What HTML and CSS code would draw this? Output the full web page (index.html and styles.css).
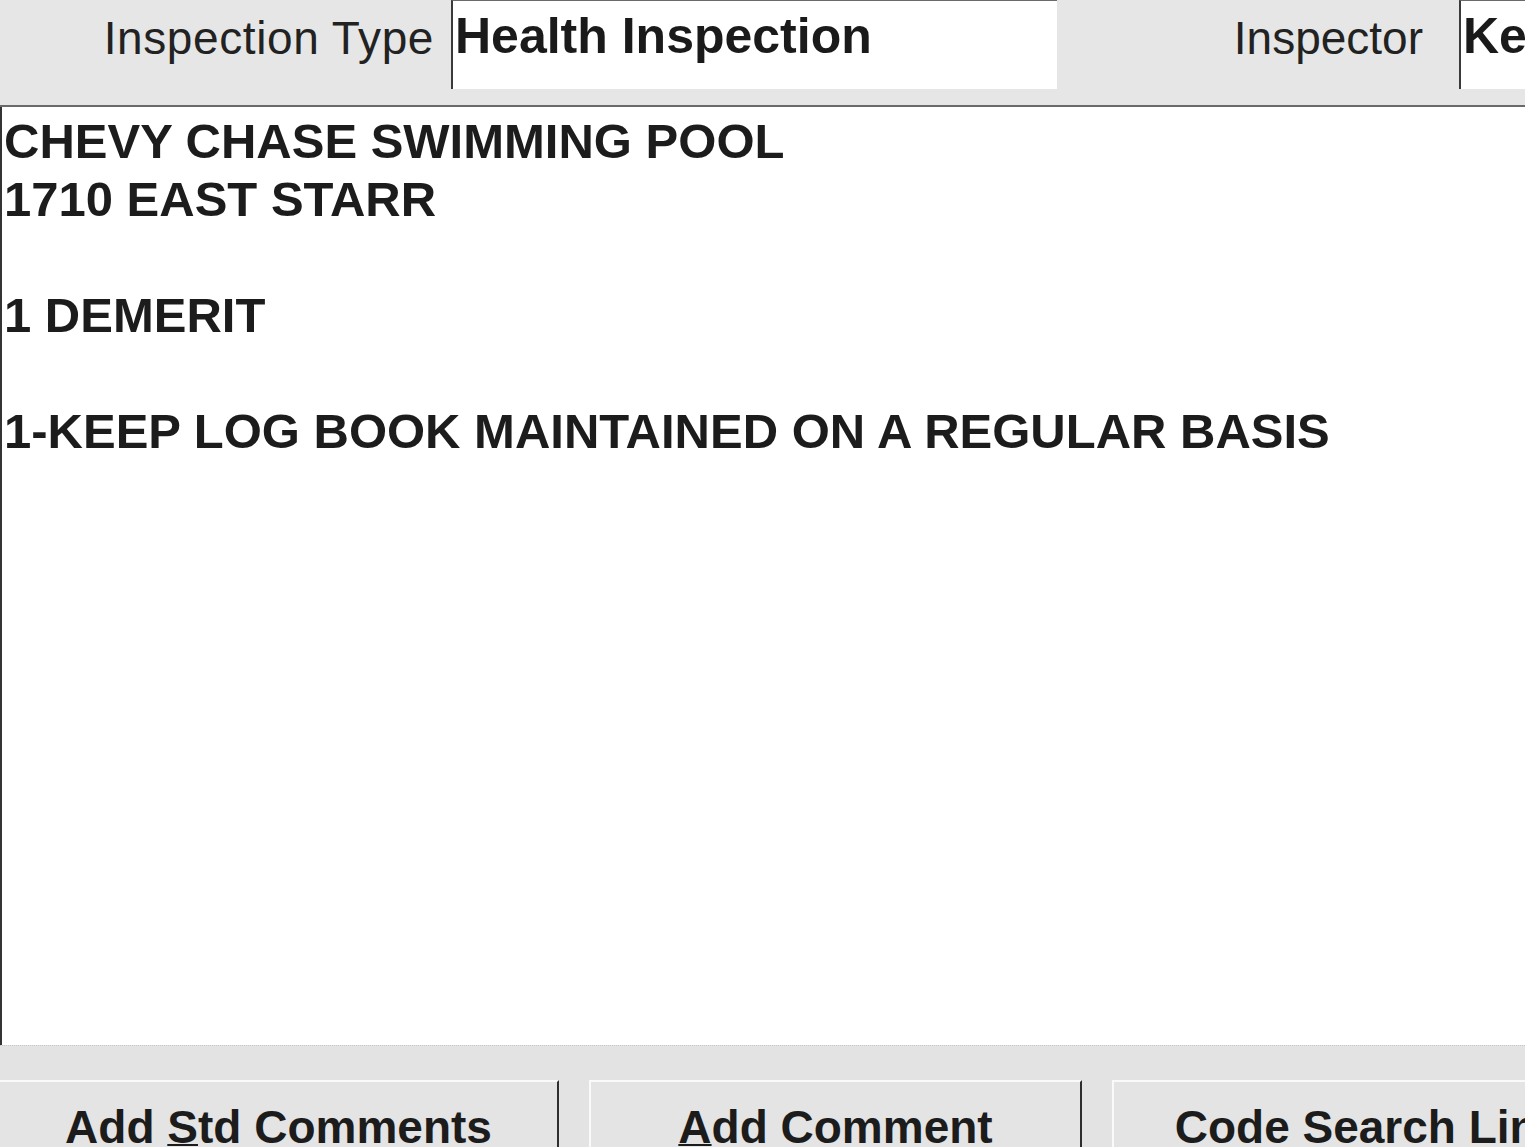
FILE: index.html
```html
<!DOCTYPE html>
<html>
<head>
<meta charset="utf-8">
<link rel="stylesheet" href="styles.css">
</head>
<body>
<div class="screen">
  <div class="topbar">
    <div class="label label-type">Inspection Type</div>
    <div class="field field-type">Health Inspection</div>
    <div class="label label-inspector">Inspector</div>
    <div class="field field-inspector">Ke</div>
  </div>
  <div class="editor">
    <div class="line">CHEVY CHASE SWIMMING POOL</div>
    <div class="line">1710 EAST STARR</div>
    <div class="line">&nbsp;</div>
    <div class="line">1 DEMERIT</div>
    <div class="line">&nbsp;</div>
    <div class="line">1-KEEP LOG BOOK MAINTAINED ON A REGULAR BASIS</div>
  </div>
  <div class="actions">
    <div class="btn btn-std">Add <u>S</u>td Comments</div>
    <div class="btn btn-add"><u>A</u>dd Comment</div>
    <div class="btn btn-code">Code Search Link</div>
  </div>
</div>
</body>
</html>
```
FILE: styles.css
```css
html, body {
  margin: 0;
  padding: 0;
  background: #e6e6e6;
}
body {
  width: 1525px;
  height: 1147px;
  overflow: hidden;
  font-family: "Liberation Sans", Arial, sans-serif;
  color: #1c1c1c;
}
.screen {
  display: flex;
  flex-direction: column;
  width: 1525px;
  height: 1147px;
  overflow: hidden;
}
.topbar {
  display: flex;
  align-items: flex-start;
  height: 105px;
  flex: none;
  background: #e6e6e6;
  border-bottom: 2px solid #6a6a6a;
}
.label {
  flex: none;
  box-sizing: border-box;
  text-align: right;
  font-size: 46px;
  line-height: normal;
  padding-top: 11px;
  white-space: nowrap;
  color: #222;
}
.label-type {
  width: 451px;
  padding-right: 17px;
  letter-spacing: 0.6px;
}
.label-inspector {
  width: 402px;
  padding-right: 36px;
}
.field {
  box-sizing: border-box;
  height: 89px;
  background: #fff;
  border-left: 2px solid #3a3a3a;
  border-top: 1px solid #6a6a6a;
  font-size: 50px;
  font-weight: bold;
  line-height: normal;
  padding-top: 6px;
  padding-left: 2px;
  white-space: nowrap;
  overflow: hidden;
  color: #1a1a1a;
}
.field-type {
  width: 606px;
  flex: none;
}
.field-inspector {
  flex: 1;
}
.editor {
  flex: none;
  box-sizing: border-box;
  height: 938px;
  background: #fff;
  border-left: 2px solid #333;
  padding-top: 5px;
  padding-left: 2px;
  font-size: 49px;
  font-weight: bold;
  line-height: 58px;
  color: #1c1c1c;
}
.line {
  white-space: nowrap;
}
.actions {
  flex: 1;
  display: flex;
  align-items: flex-start;
  gap: 30px;
  padding-top: 34px;
  border-top: 1px dotted #c8c8c8;
  background: #e3e3e3;
}
.btn {
  flex: none;
  box-sizing: border-box;
  height: 80px;
  border-top: 2px solid #fafafa;
  border-left: 2px solid #fafafa;
  border-right: 2px solid #2e2e2e;
  background: #e4e4e4;
  text-align: center;
  font-size: 46px;
  font-weight: bold;
  line-height: normal;
  padding-top: 18px;
  white-space: nowrap;
  color: #1c1c1c;
}
.btn u {
  text-decoration-thickness: 2px;
  text-underline-offset: 1px;
}
.btn-std {
  width: 559px;
  border-left: none;
}
.btn-add {
  width: 493px;
}
.btn-code {
  width: 514px;
  overflow: hidden;
}
```
